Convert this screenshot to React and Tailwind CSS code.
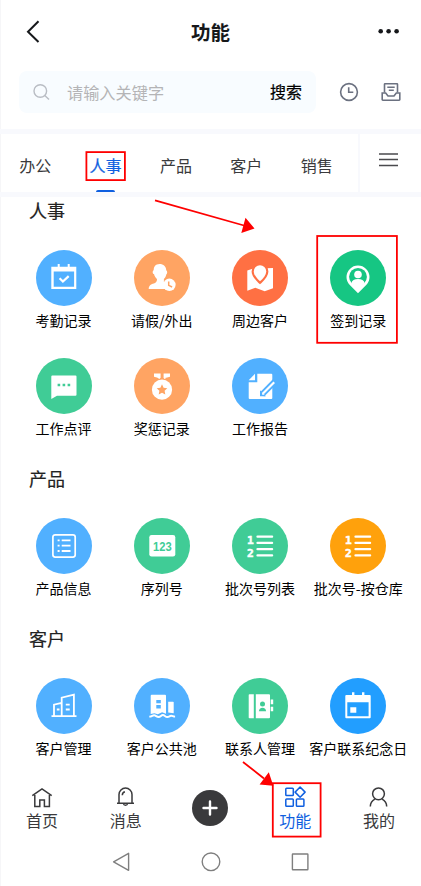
import React, { useState } from 'react';

const CalendarCheckIcon = () => (
  <>
    <path fill="#fff" fillRule="evenodd" d="M1.3 2.8h6.4V0h2v2.8h8V0h2v2.8h6.6V25h-25zM3.7 7.4v15.4h20.4V7.4z" />
    <path fill="none" stroke="#fff" strokeWidth="2.2" d="M9.6 14.2l3.3 3.3 5.8-5.4" />
  </>
);

const LeaveIcon = () => (
  <>
    <path fill="#fff" d="M11.500 0C7.600 0 5.600 2.900 5.700 6.200c-1.500.6-1.300 3.600.3 3.900.4 2.200 1.600 3.800 3 4.900 0 1.700-.4 3.200-2 3.900-3 1.100-6.300 1.700-6.300 6.100h20.500v-5l-5.300-2v-3c1.400-1.200 2-2.800 2.400-4.500 1.300-1 1.200-3.600-.1-4.200C18.200 2.700 15.500 0 11.500 0z" />
    <circle cx="21.4" cy="20.8" r="6.2" fill="#fff" />
    <path fill="none" stroke="#ffa463" strokeWidth="1.5" d="M20.7 17.5v3.8l3.4 1.7" />
  </>
);

const MapIcon = () => (
  <>
    <path fill="#fff" d="M1.3 6.5L8 4.3h12L27 4v20.2l-8.3 3-9.4-3.4-8 2.9z" />
    <path fill="#fff" stroke="#ff7043" strokeWidth="4.4" d="M14 17.3C10.5 13.9 7.8 11 7.8 7.4a6.2 6.2 0 0 1 12.4 0c0 3.6-2.7 6.5-6.2 9.9z" />
    <path fill="#fff" d="M14 17.3C10.5 13.9 7.8 11 7.8 7.4a6.2 6.2 0 0 1 12.4 0c0 3.6-2.7 6.5-6.2 9.9z" />
  </>
);

const CheckInIcon = () => (
  <>
    <path fill="#fff" d="M14 29.3L5.8 21.1A11.5 11.5 0 1 1 22.2 21.1z" />
    <circle cx="14" cy="12.8" r="8.9" fill="#16c683" />
    <circle cx="14" cy="10.5" r="3.8" fill="#fff" />
    <path fill="#fff" d="M7.4 19.3c.5-3 3-4.3 6.6-4.3s6.1 1.3 6.6 4.3L14 25z" />
  </>
);

const CommentIcon = () => (
  <>
    <path fill="#fff" d="M2.3 3.4h23.2a1 1 0 0 1 1 1v18.3a1 1 0 0 1-1 1H7L1.3 27V4.4a1 1 0 0 1 1-1z" />
    <path stroke="#40cc96" strokeWidth="2.6" d="M7.6 13h2.6M12.6 13h2.6M17.6 13h2.6" />
  </>
);

const MedalIcon = () => (
  <>
    <path fill="#fff" d="M6 1.5h6.6v4.2H9.8L6 4.8zM15.6 1.5H22v3.3l-3.8.9h-2.6zM9 5.5l3.6.2-1.2 1.2zM19 5.5l-3.6.2 1.2 1.2z" />
    <circle cx="14" cy="17.7" r="10.1" fill="#fff" />
    <path fill="#ffa463" d="M14 12.3l1.6 3.4 3.7.5-2.7 2.6.7 3.7-3.3-1.8-3.3 1.8.7-3.7-2.7-2.6 3.7-.5z" />
  </>
);

const ReportIcon = () => (
  <>
    <path fill="#fff" d="M11.3 1.7h14a1 1 0 0 1 1 1V26a1 1 0 0 1-1 1H3.7a1 1 0 0 1-1-1V10.3h8.6z" />
    <path fill="#fff" d="M9 1.8v6.4H2.7z" />
    <path fill="none" stroke="#51b0ff" strokeWidth="6" d="M29 9.3L16 22.5" />
    <path fill="#51b0ff" d="M14 18.3v6h6z" />
    <path fill="none" stroke="#fff" strokeWidth="2.2" d="M28.2 10.3L17 21.5" />
    <path fill="#fff" d="M16.1 20.2v2.5h2.6z" />
  </>
);

const ListIcon = () => (
  <g fill="none" stroke="#fff">
    <rect x="2.9" y="2.8" width="22.3" height="22.3" rx="2.3" strokeWidth="1.7" />
    <path strokeWidth="1.8" d="M7.6 8.3h2M11.7 8.3h8.8M7.6 13.7h2M11.7 13.7h8.8M7.6 19h2M11.7 19h8.8" />
  </g>
);

const SerialIcon = () => (
  <>
    <rect x="1.3" y="3" width="26" height="21.6" rx="2.3" fill="#fff" />
    <text x="5" y="18.8" fontSize="13.4" fontWeight="700" textLength="18.6" lengthAdjust="spacingAndGlyphs" fill="#40cc96" fontFamily="Liberation Sans, sans-serif">123</text>
  </>
);

const NumberedIcon = () => (
  <>
    <path stroke="#fff" strokeWidth="2.3" strokeLinecap="round" d="M11.5 4.7h14.6M11.5 10.9h14.6M11.5 17.2h14.6M11.5 23.4h14.6" />
    <g fill="#fff" stroke="#fff" strokeWidth=".5" fontSize="11.3" fontWeight="700" fontFamily="DejaVu Sans Mono, monospace">
      <text x="1" y="11.8">1</text>
      <text x="1" y="24.5">2</text>
    </g>
  </>
);

const BuildingIcon = () => (
  <g fill="none" stroke="#fff" strokeWidth="1.8">
    <path d="M1.5 24.1h25M4 24V12.7l7.7-1.9M11.7 24V5.6l12.2-2.9V24" />
    <path d="M15.8 12.6h3.9M15.8 17.5h3.9M6.8 17.5h2.7" />
  </g>
);

const PoolIcon = () => (
  <>
    <path fill="#fff" fillRule="evenodd" d="M3.7 2.7H17a1 1 0 0 1 1 1v18.1l-3.9-1.6-4.3 2-3.4-1-3.7.7V3.7a1 1 0 0 1 1-1zM8.3 8v3.3h4.5V8zM8.3 13v3.4h4.5V13z" />
    <path fill="#fff" d="M20.2 9.8H25a.7.7 0 0 1 .7.7v10.8l-5.5-.8z" />
    <path fill="none" stroke="#fff" strokeWidth="1.9" d="M1.3 24.6c2.7 0 3-1.3 4.8-1.3s2.4 1.7 4.5 1.7 2.5-2 4.3-2 2.3 2 4.4 2 2.2-1.2 3.8-1.2 1.9.8 4 .8" />
  </>
);

const ContactIcon = () => (
  <>
    <path fill="#fff" d="M3.5 2.3h4.3v24H3.5a.8.8 0 0 1-.8-.8V3.1a.8.8 0 0 1 .8-.8zM9.8 2.3H23a1 1 0 0 1 1 1v22a1 1 0 0 1-1 1H9.8z" />
    <path fill="#fff" d="M24.7 7.6h2.5v4.6h-2.5zM24.7 14.7h2.5v4.6h-2.5z" />
    <circle cx="16.5" cy="12" r="2.5" fill="#40cc96" />
    <path fill="#40cc96" d="M12.9 19.2c.2-2.2 1.4-3.5 3.6-3.5s3.4 1.3 3.6 3.5z" />
  </>
);

const MemorialIcon = () => (
  <path fill="#fff" fillRule="evenodd" d="M2.3 3H8V.3h2.4V3H18V.3h2.4V3h5.3a1 1 0 0 1 1 1v21.3a1 1 0 0 1-1 1H2.3a1 1 0 0 1-1-1V4a1 1 0 0 1 1-1zM3.3 10.2v14h21.3v-14zM6.3 15.3h6v5.4h-6z" />
);

const sections = [
  {
    title: '人事',
    items: [
      { label: '考勤记录', color: 'bg-[#51b0ff]', Icon: CalendarCheckIcon },
      { label: '请假/外出', color: 'bg-[#ffa463]', Icon: LeaveIcon },
      { label: '周边客户', color: 'bg-[#ff7043]', Icon: MapIcon },
      { label: '签到记录', color: 'bg-[#16c683]', Icon: CheckInIcon },
      { label: '工作点评', color: 'bg-[#40cc96]', Icon: CommentIcon },
      { label: '奖惩记录', color: 'bg-[#ffa463]', Icon: MedalIcon },
      { label: '工作报告', color: 'bg-[#51b0ff]', Icon: ReportIcon },
    ],
  },
  {
    title: '产品',
    items: [
      { label: '产品信息', color: 'bg-[#51b0ff]', Icon: ListIcon },
      { label: '序列号', color: 'bg-[#40cc96]', Icon: SerialIcon },
      { label: '批次号列表', color: 'bg-[#40cc96]', Icon: NumberedIcon },
      { label: '批次号-按仓库', color: 'bg-[#ffa10c]', Icon: NumberedIcon },
    ],
  },
  {
    title: '客户',
    items: [
      { label: '客户管理', color: 'bg-[#51b0ff]', Icon: BuildingIcon },
      { label: '客户公共池', color: 'bg-[#51b0ff]', Icon: PoolIcon },
      { label: '联系人管理', color: 'bg-[#40cc96]', Icon: ContactIcon },
      { label: '客户联系纪念日', color: 'bg-[#229eff]', Icon: MemorialIcon },
    ],
  },
];

const tabs = ['办公', '人事', '产品', '客户', '销售'];

const Header = () => (
  <header className="h-[71px] pt-[7px] pb-[15px] flex items-center justify-between px-[23px]">
    <button className="w-6 h-6" aria-label="返回">
      <svg className="w-6 h-6" viewBox="0 0 24 24" fill="none" stroke="#16181b" strokeWidth="2">
        <path d="M15.5 1.2L5 11.7 15.5 22" />
      </svg>
    </button>
    <h1 className="text-[19.5px] leading-7 font-bold text-[#16181b]">功能</h1>
    <button className="w-6 h-6" aria-label="更多">
      <svg className="w-6 h-6 overflow-visible" viewBox="0 0 24 24" fill="#16181b">
        <circle cx="6.7" cy="11.3" r="2.3" />
        <circle cx="14.6" cy="11.3" r="2.3" />
        <circle cx="22.6" cy="11.3" r="2.3" />
      </svg>
    </button>
  </header>
);

const SearchBar = () => (
  <div className="flex items-center h-[42px] pl-[19px]">
    <div className="flex items-center w-[297px] h-[42px] rounded-[8px] bg-[#f8fcff] pl-[13px] pr-[14px]">
      <svg className="w-[18px] h-[18px]" viewBox="0 0 18 18" fill="none" stroke="#b9bdc4" strokeWidth="1.4">
        <circle cx="8.3" cy="8" r="6.3" />
        <path d="M12.8 12.6l4.2 4" />
      </svg>
      <span className="ml-[17px] text-[16.2px] leading-6 text-[#b4b4b6]">请输入关键字</span>
      <button className="ml-auto pb-0.5 text-[16px] leading-6 text-black [-webkit-text-stroke:0.2px_#000]">搜索</button>
    </div>
    <svg className="ml-[23px] w-5 h-5" viewBox="0 0 20 20" fill="none" stroke="#6b7180" strokeWidth="1.6">
      <circle cx="10" cy="10" r="8.4" />
      <path d="M9.7 5.2v5.1h4.6" />
    </svg>
    <svg className="ml-[22px] w-5 h-5" viewBox="0 0 20 20" fill="none" stroke="#6b7180" strokeWidth="1.6">
      <path d="M3.5 10.5V2.3a.5.5 0 0 1 .5-.5h12a.5.5 0 0 1 .5.5v8.2M6.3 5.3h7.4M7.8 8.3h5" />
      <path d="M1.2 11h3.5l2.3 3h6l2.3-3h3.5v6.6a.6.6 0 0 1-.6.6H1.8a.6.6 0 0 1-.6-.6z" />
    </svg>
  </div>
);

const TabBar = ({ active, onChange }) => (
  <nav className="flex h-[68px] border-y-[5px] border-[#f8f9fd]">
    <div className="flex w-[358px]">
      {tabs.map((tab) => (
        <button
          key={tab}
          onClick={() => onChange(tab)}
          className={`flex flex-col items-center w-[70.4px] shrink-0 pt-[19px] text-[16px] leading-6 ${tab === active ? 'text-[#0f5fe0] [-webkit-text-stroke:0.2px_#0f5fe0]' : 'text-[#3a3a3c]'}`}
        >
          {tab}
          {tab === active && <span className="mt-auto w-[19px] h-[2px] rounded-t-[2px] bg-[#0f5fe0]" />}
        </button>
      ))}
    </div>
    <div className="flex flex-1 border-l-2 border-[#f8f9fd] pt-[19px] pl-[19px]">
      <svg className="w-[19px] h-[14px]" viewBox="0 0 19 14" stroke="#4a4a4d" strokeWidth="1.3">
        <path d="M0 1h19M0 6.5h19M0 12.5h19" />
      </svg>
    </div>
  </nav>
);

const Section = ({ title, items }) => (
  <section className="mb-[27px]">
    <h2 className="pl-[29px] text-[18px] leading-[26px] text-[#222] [-webkit-text-stroke:0.2px_#222]">{title}</h2>
    <div className="mt-[27px] ml-[14.4px] w-[393px] grid grid-cols-4 gap-y-7">
      {items.map(({ label, color, Icon }) => (
        <div key={label} className="flex flex-col items-center h-20">
          <div className={`w-14 h-14 rounded-full flex items-center justify-center ${color}`}>
            <svg className="w-7 h-7 overflow-visible" viewBox="0 0 28 28">
              <Icon />
            </svg>
          </div>
          <span className="mt-1 text-[14px] leading-5 whitespace-nowrap text-black">{label}</span>
        </div>
      ))}
    </div>
  </section>
);

const NavItem = ({ label, active, children }) => (
  <button className={`flex flex-col items-center w-[84px] ${active ? 'text-[#0f5fe0]' : 'text-[#3a3a3c]'}`}>
    <svg className="w-[22px] h-[22px]" viewBox="0 0 22 22" fill="none" stroke="currentColor" strokeWidth="1.5">
      {children}
    </svg>
    <span className="text-[16px] leading-6">{label}</span>
  </button>
);

const BottomNav = () => (
  <nav className="flex h-[60px] pt-px">
    <NavItem label="首页">
      <path d="M1.3 9.7L11 3l9.7 6.7M3.8 9v11.4h5v-6.5h4.6v6.5h5V9" />
    </NavItem>
    <NavItem label="消息">
      <path d="M4 17.3V8.6a6.5 6.5 0 0 1 13 0v8.7M2 17.3h17M8.4 17.5c.2 1.2 1 1.8 2.1 1.8s1.900-.6 2.100-1.800M7.300 9.200c0-1.800.8-3 2.600-3.500" />
    </NavItem>
    <div className="flex justify-center w-[86px] pt-1">
      <button className="w-9 h-9 rounded-full bg-[#3a3a3c] flex items-center justify-center" aria-label="新增">
        <svg className="w-4 h-4" viewBox="0 0 16 16" stroke="#fff" strokeWidth="2.4" strokeLinecap="round">
          <path d="M1.5 8h13M8 1.5v13" />
        </svg>
      </button>
    </div>
    <NavItem label="功能" active>
      <rect x="1.8" y="2.3" width="7.5" height="7.2" rx=".8" />
      <rect x="1.8" y="13" width="7.5" height="7.2" rx=".8" />
      <rect x="12.4" y="13" width="7.5" height="7.2" rx=".8" />
      <path strokeLinejoin="round" d="M16.1 1l5 5.1-5 5.1-5-5.1z" />
    </NavItem>
    <NavItem label="我的">
      <circle cx="10.5" cy="7.8" r="5.9" />
      <path d="M2.3 20.5c.1-3.2 1.7-5.7 4.6-7.3M18.7 20.5c-.1-3.2-1.7-5.7-4.6-7.3" />
    </NavItem>
  </nav>
);

const SystemBar = () => (
  <div className="flex items-center justify-center gap-[69px] h-[34px]">
    <svg className="w-5 h-5" viewBox="0 0 20 20" fill="none" stroke="#7f7f7f" strokeWidth="1.4">
      <path strokeLinejoin="round" d="M16.6 1.3v17L1.6 9.8z" />
    </svg>
    <svg className="w-5 h-5" viewBox="0 0 20 20" fill="none" stroke="#7f7f7f" strokeWidth="1.4">
      <circle cx="10" cy="9.8" r="8.8" />
    </svg>
    <svg className="w-5 h-5" viewBox="0 0 20 20" fill="none" stroke="#7f7f7f" strokeWidth="1.4">
      <rect x="2.4" y="2" width="15.5" height="15.8" rx=".5" />
    </svg>
  </div>
);

// Red guide boxes and arrows laid over the screen
const Annotations = () => (
  <svg className="absolute inset-0 w-[421px] h-[886px] pointer-events-none" viewBox="0 0 421 886" fill="none" stroke="#fe0000" strokeWidth="1.8">
    <rect x="86.4" y="152.1" width="38.5" height="28" />
    <rect x="317.2" y="236" width="79.7" height="106.8" />
    <rect x="272.8" y="783.2" width="47.8" height="53.4" />
    <path d="M155 200.3L244 225.5M243 762L264 778.5" />
    <path fill="#fe0000" stroke="none" d="M254.5 228.5l-9-10.7-4.2 15.2zM273.3 785.8l-4.500-13.600-9.200 12.200z" />
  </svg>
);

const App = () => {
  const [activeTab, setActiveTab] = useState('人事');

  return (
    <div className="relative w-[421px] h-[886px] overflow-hidden bg-white shadow-[inset_1px_0_0_#f6f6f8] font-['Noto_Sans_CJK_SC',sans-serif]">
      <Header />
      <SearchBar />
      <div className="h-4" />
      <TabBar active={activeTab} onChange={setActiveTab} />
      <main className="h-[588px] overflow-hidden">
        {sections.map((section) => (
          <Section key={section.title} {...section} />
        ))}
      </main>
      <BottomNav />
      <SystemBar />
      <Annotations />
    </div>
  );
};

export default App;
